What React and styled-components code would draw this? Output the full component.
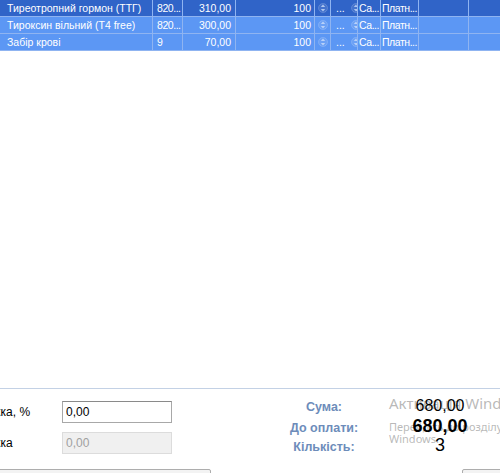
import React from "react";
import styled, { createGlobalStyle } from "styled-components";

const Global = createGlobalStyle`
  html, body { margin: 0; padding: 0; background: #ffffff; }
  body { overflow: hidden; font-family: "Liberation Sans", Arial, sans-serif; }
`;

const Window = styled.div`
  position: relative;
  width: 500px;
  height: 473px;
  display: flex;
  flex-direction: column;
  overflow: hidden;
  background: #ffffff;
`;

const Grid = styled.div`
  display: grid;
  grid-template-columns: 152px 29px 52px 78px 15px 26px 22px 37px 49px 1fr;
  grid-auto-rows: 16px;
  gap: 1px;
  background: #8fb4f1;
  padding-bottom: 1px;
  font-family: "Liberation Sans", Arial, sans-serif;
  font-size: 10.5px;
  color: #ffffff;
`;

const Cell = styled.div`
  background: ${(p) => (p.$current ? "#3064c8" : "#5c97f4")};
  line-height: 16px;
  white-space: nowrap;
  overflow: hidden;
  display: flex;
  align-items: center;
  justify-content: ${(p) => (p.$align === "right" ? "flex-end" : p.$align === "center" ? "center" : "flex-start")};
  padding: ${(p) => p.$pad || "0 3px"};
  letter-spacing: ${(p) => (p.$tight ? "-0.45px" : "normal")};
  box-sizing: border-box;
`;

const SpinWrap = styled.span`
  display: inline-flex;
  margin-left: ${(p) => p.$gap || "0"};
`;

/* tiny up/down stepper glyph drawn in each spin cell */
const Spinner = ({ gap }) => (
  <SpinWrap $gap={gap}>
    <svg width="10" height="12" viewBox="0 0 10 12">
      <circle cx="5" cy="6" r="4.5" fill="rgba(255,255,255,0.10)" stroke="rgba(255,255,255,0.22)" strokeWidth="0.8" />
      <path d="M2.8 5 L5 2.6 L7.2 5 Z" fill="rgba(210,225,250,0.75)" />
      <path d="M2.8 7 L5 9.4 L7.2 7 Z" fill="rgba(210,225,250,0.75)" />
    </svg>
  </SpinWrap>
);

const Spacer = styled.div`
  flex: 1;
`;

const Footer = styled.div`
  border-top: 1px solid #c3d1e5;
  height: 84px;
  display: flex;
  flex-direction: column;
`;

const FooterTop = styled.div`
  display: flex;
  flex: 1;
`;

const Form = styled.div`
  margin-left: -28px;
  padding-top: 12px;
  display: flex;
  flex-direction: column;
  gap: 9px;
`;

const FormRow = styled.div`
  display: flex;
  align-items: center;
`;

const FieldLabel = styled.label`
  width: 90px;
  font-size: 12px;
  color: #000000;
  white-space: nowrap;
`;

const Field = styled.input`
  width: 110px;
  height: 22px;
  box-sizing: border-box;
  margin: 0;
  padding: 0 3px;
  font-family: "Liberation Sans", Arial, sans-serif;
  font-size: 12px;
  color: ${(p) => (p.disabled ? "#a0a0a0" : "#000000")};
  background: ${(p) => (p.disabled ? "#f0f0f0" : "#ffffff")};
  border: 1px solid ${(p) => (p.disabled ? "#dcdcdc" : "#a8a8a8")};
  border-top-color: ${(p) => (p.disabled ? "#dcdcdc" : "#8a8a8a")};
  outline: none;
`;

const Summary = styled.div`
  position: relative;
  z-index: 1;
  margin-left: 107px;
  padding-top: 8px;
  display: grid;
  grid-template-columns: 90px 80px;
  column-gap: 31px;
  grid-auto-rows: 19px;
  align-items: baseline;
`;

const SumLabel = styled.div`
  text-align: center;
  font-size: 12.5px;
  font-weight: bold;
  color: #6d8cba;
  white-space: nowrap;
`;

const SumValue = styled.div`
  text-align: center;
  font-size: ${(p) => p.$size || "16px"};
  font-weight: ${(p) => (p.$bold ? "bold" : "normal")};
  color: #000000;
`;

const BottomBar = styled.div`
  display: flex;
  justify-content: space-between;
  height: 4px;
  overflow: visible;
`;

const Button = styled.button`
  height: 24px;
  width: ${(p) => p.$w};
  margin: 0 ${(p) => p.$mr || "0"} 0 ${(p) => p.$ml || "0"};
  background: #f3f3f3;
  border: 1px solid #adadad;
  border-radius: 2px;
  padding: 0;
`;

const Watermark = styled.div`
  position: absolute;
  left: 389px;
  top: 394px;
  z-index: 0;
  pointer-events: none;
  font-family: "Noto Sans", "Open Sans", sans-serif;
  color: rgba(125, 125, 125, 0.55);
  white-space: nowrap;
`;

const WmTitle = styled.div`
  font-size: 15px;
  line-height: 18px;
`;

const WmText = styled.div`
  margin-top: 9px;
  font-size: 11px;
  line-height: 12px;
`;

const rows = [
  { name: "Тиреотропний гормон (ТТГ)", code: "820...", price: "310,00", pct: "100", current: true },
  { name: "Тироксин вільний (T4 free)", code: "820...", price: "300,00", pct: "100" },
  { name: "Забір крові", code: "9", price: "70,00", pct: "100" },
];

export default function App() {
  return (
    <>
      <Global />
      <Window>
        <Grid>
          {rows.map((r, i) => (
            <React.Fragment key={i}>
              <Cell $current={r.current} $pad="0 0 0 7px">{r.name}</Cell>
              <Cell $current={r.current} $pad="0 0 0 4px" $tight>{r.code}</Cell>
              <Cell $current={r.current} $align="right" $pad="0 4px 0 0">{r.price}</Cell>
              <Cell $current={r.current} $align="right" $pad="0 3px 0 0">{r.pct}</Cell>
              <Cell $current={r.current} $align="center" $pad="0">
                <Spinner />
              </Cell>
              <Cell $current={r.current} $pad="0 0 0 5px">
                ...
                <Spinner gap="6px" />
              </Cell>
              <Cell $current={r.current} $pad="0 0 0 1px" $tight>Са...</Cell>
              <Cell $current={r.current} $pad="0 0 0 1px" $tight>Платн...</Cell>
              <Cell $current={r.current} />
              <Cell $current={r.current} />
            </React.Fragment>
          ))}
        </Grid>
        <Spacer />
        <Footer>
          <FooterTop>
            <Form>
              <FormRow>
                <FieldLabel>Знижка, %</FieldLabel>
                <Field defaultValue="0,00" />
              </FormRow>
              <FormRow>
                <FieldLabel>Знижка</FieldLabel>
                <Field defaultValue="0,00" disabled />
              </FormRow>
            </Form>
            <Summary>
              <SumLabel>Сума:</SumLabel>
              <SumValue>680,00</SumValue>
              <SumLabel>До оплати:</SumLabel>
              <SumValue $bold $size="18px">680,00</SumValue>
              <SumLabel>Кількість:</SumLabel>
              <SumValue $size="18px">3</SumValue>
            </Summary>
          </FooterTop>
          <BottomBar>
            <Button $w="222px" $ml="-11px" />
            <Button $w="60px" $mr="-22px" />
          </BottomBar>
        </Footer>
        <Watermark>
          <WmTitle>Активація Windows</WmTitle>
          <WmText>
            Перейдіть до розділу "Настройки", щоб активувати
            <br />
            Windows.
          </WmText>
        </Watermark>
      </Window>
    </>
  );
}
